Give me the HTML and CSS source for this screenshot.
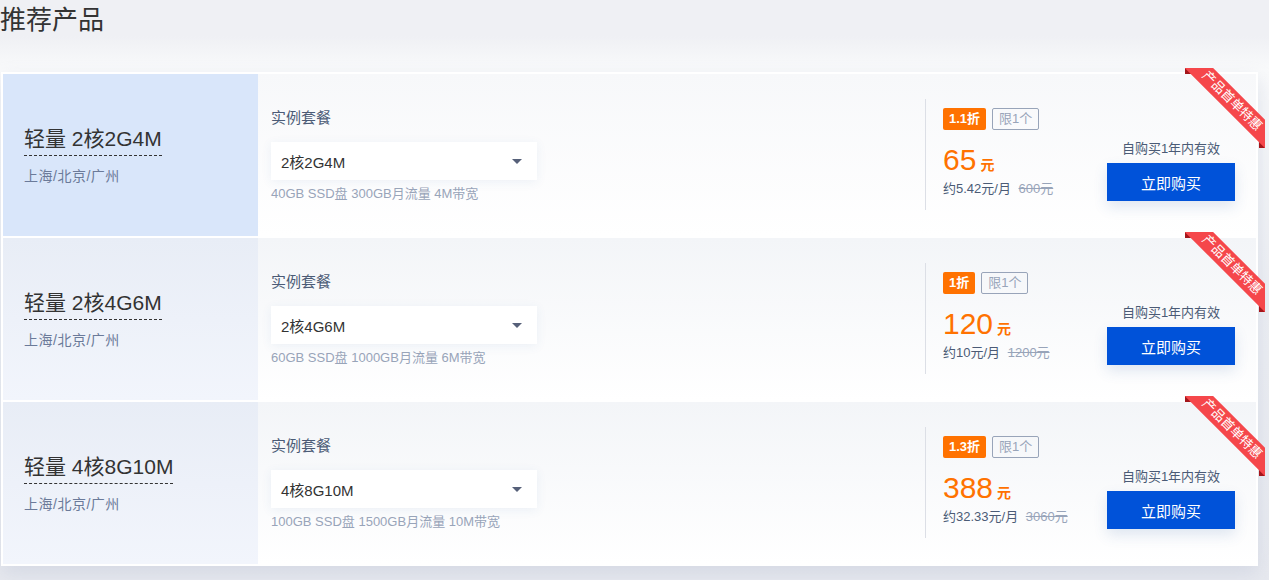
FILE: index.html
```html
<!DOCTYPE html>
<html lang="zh-CN">

<head>
    <meta charset="UTF-8">
    <meta name="viewport" content="width=device-width, initial-scale=1.0">
    <title>推荐产品</title>
    <link rel="stylesheet" href="styles.css">
</head>

<body>
    <h2 class="title">推荐产品</h2>
    <div class="list">
        <!-- 2核2G4M -->
        <div class="item active">
            <div class="name">
                <span class="spec">轻量 2核2G4M</span>
                <span class="area">上海/北京/广州</span>
            </div>
            <div class="config">
                <p class="label">实例套餐</p>
                <div class="select">
                    <span>2核2G4M</span>
                    <i class="caret"></i>
                </div>
                <p class="desc">40GB SSD盘 300GB月流量 4M带宽</p>
            </div>
            <div class="buy">
                <div class="price">
                    <div class="tags">
                        <span class="off">1.1折</span>
                        <span class="limit">限1个</span>
                    </div>
                    <div class="now"><b>65</b><span>元</span></div>
                    <div class="month">约5.42元/月 <del>600元</del></div>
                </div>
                <div class="action">
                    <p>自购买1年内有效</p>
                    <button class="btn">立即购买</button>
                </div>
            </div>
            <div class="ribbon"><span>产品首单特惠</span></div>
        </div>
        <!-- 2核4G6M -->
        <div class="item">
            <div class="name">
                <span class="spec">轻量 2核4G6M</span>
                <span class="area">上海/北京/广州</span>
            </div>
            <div class="config">
                <p class="label">实例套餐</p>
                <div class="select">
                    <span>2核4G6M</span>
                    <i class="caret"></i>
                </div>
                <p class="desc">60GB SSD盘 1000GB月流量 6M带宽</p>
            </div>
            <div class="buy">
                <div class="price">
                    <div class="tags">
                        <span class="off">1折</span>
                        <span class="limit">限1个</span>
                    </div>
                    <div class="now"><b>120</b><span>元</span></div>
                    <div class="month">约10元/月 <del>1200元</del></div>
                </div>
                <div class="action">
                    <p>自购买1年内有效</p>
                    <button class="btn">立即购买</button>
                </div>
            </div>
            <div class="ribbon"><span>产品首单特惠</span></div>
        </div>
        <!-- 4核8G10M -->
        <div class="item">
            <div class="name">
                <span class="spec">轻量 4核8G10M</span>
                <span class="area">上海/北京/广州</span>
            </div>
            <div class="config">
                <p class="label">实例套餐</p>
                <div class="select">
                    <span>4核8G10M</span>
                    <i class="caret"></i>
                </div>
                <p class="desc">100GB SSD盘 1500GB月流量 10M带宽</p>
            </div>
            <div class="buy">
                <div class="price">
                    <div class="tags">
                        <span class="off">1.3折</span>
                        <span class="limit">限1个</span>
                    </div>
                    <div class="now"><b>388</b><span>元</span></div>
                    <div class="month">约32.33元/月 <del>3060元</del></div>
                </div>
                <div class="action">
                    <p>自购买1年内有效</p>
                    <button class="btn">立即购买</button>
                </div>
            </div>
            <div class="ribbon"><span>产品首单特惠</span></div>
        </div>
    </div>
</body>

</html>
```

FILE: styles.css
```css
body {
    margin: 0;
    font-family: "Liberation Sans", "Noto Sans CJK SC", sans-serif;
    background: linear-gradient(180deg, #eff0f4 0, #eff0f4 36px, #f9fafb 70px, #eceef3 300px, #e7e9ef 100%);
    min-height: 580px;
    color: #333;
}

p {
    margin: 0;
}

.title {
    margin: 0;
    padding-top: 3px;
    font-size: 26px;
    line-height: 34px;
    font-weight: normal;
    color: #333;
}

.list {
    margin: 35px 0 0 1px;
    width: 1253px;
    padding: 2px;
    background: #fff;
    display: flex;
    flex-direction: column;
    gap: 2px;
    box-shadow: 0 8px 18px rgba(190, 198, 214, .45);
}

.item {
    position: relative;
    display: flex;
    height: 162px;
    background: linear-gradient(180deg, #f3f5f8, #fff);
}

.item.active {
    background: linear-gradient(180deg, #f7f8fa, #fff);
}

.name {
    width: 234px;
    padding-left: 21px;
    display: flex;
    flex-direction: column;
    justify-content: center;
    align-items: flex-start;
    background: linear-gradient(180deg, #e8edf6, #f2f5fc);
}

.item.active .name {
    background: #d9e6fa;
}

.spec {
    font-size: 21px;
    line-height: 28px;
    padding-bottom: 2px;
    border-bottom: 1px dashed #333;
    color: #333;
}

.area {
    margin-top: 10px;
    font-size: 14px;
    line-height: 20px;
    letter-spacing: .5px;
    color: #6b7a99;
}

.config {
    flex: 1;
    padding: 34px 0 0 13px;
}

.label {
    font-size: 15px;
    line-height: 20px;
    color: #4b5b76;
}

.select {
    margin-top: 14px;
    width: 256px;
    height: 38px;
    padding: 0 0 0 10px;
    display: flex;
    align-items: center;
    justify-content: space-between;
    background: #fff;
    box-shadow: 0 2px 10px rgba(55, 99, 170, .08);
    font-size: 15px;
    color: #333;
}

.caret {
    margin-right: 15px;
    width: 0;
    height: 0;
    border-left: 5px solid transparent;
    border-right: 5px solid transparent;
    border-top: 5px solid #566079;
}

.desc {
    margin-top: 5px;
    font-size: 13px;
    line-height: 18px;
    color: #98a4b9;
}

.buy {
    width: 292px;
    margin: 25px 0 26px;
    padding: 9px 21px 9px 17px;
    border-left: 1px solid #dcdfe6;
    display: flex;
    justify-content: space-between;
}

.price {
    align-self: flex-start;
}

.tags {
    display: flex;
    gap: 6px;
    height: 22px;
}

.tags span {
    box-sizing: border-box;
    height: 22px;
    padding: 0 6px;
    font-size: 13px;
    line-height: 22px;
}

.off {
    background: #ff7200;
    color: #fff;
    font-weight: bold;
    border-radius: 2px;
}

.limit {
    border: 1px solid #98a4b9;
    line-height: 20px !important;
    color: #98a4b9;
    border-radius: 2px;
}

.now {
    margin-top: 12px;
    height: 36px;
    color: #ff7200;
    display: flex;
    align-items: baseline;
}

.now b {
    font-weight: normal;
    font-size: 30px;
    line-height: 36px;
}

.now span {
    margin-left: 4px;
    font-size: 14px;
    font-weight: bold;
}

.month {
    margin-top: 2px;
    font-size: 13px;
    line-height: 18px;
    color: #4b5b76;
}

.month del {
    margin-left: 4px;
    color: #98a4b9;
}

.action {
    align-self: flex-end;
    width: 128px;
    text-align: center;
}

.action p {
    font-size: 13px;
    line-height: 18px;
    color: #4b5b76;
    margin-bottom: 5px;
}

.btn {
    display: block;
    width: 128px;
    height: 38px;
    border: none;
    background: #0052d9;
    color: #fff;
    font-family: inherit;
    font-size: 15px;
    cursor: pointer;
    box-shadow: 0 6px 14px rgba(55, 99, 170, .15);
}

.btn:hover {
    background: #0049c2;
}

.ribbon {
    position: absolute;
    top: -6px;
    right: -9px;
    width: 80px;
    height: 80px;
    overflow: hidden;
}

.ribbon:before,
.ribbon:after {
    content: "";
    position: absolute;
    width: 6px;
    height: 6px;
    background: #a3161b;
}

.ribbon:before {
    top: 0;
    left: 0;
}

.ribbon:after {
    right: 0;
    bottom: 0;
}

.ribbon span {
    position: absolute;
    z-index: 1;
    left: -13px;
    top: 23px;
    width: 120px;
    height: 20px;
    line-height: 20px;
    text-align: center;
    background: #f5474b;
    color: #fff;
    font-size: 13px;
    transform: rotate(45deg);
}
```
